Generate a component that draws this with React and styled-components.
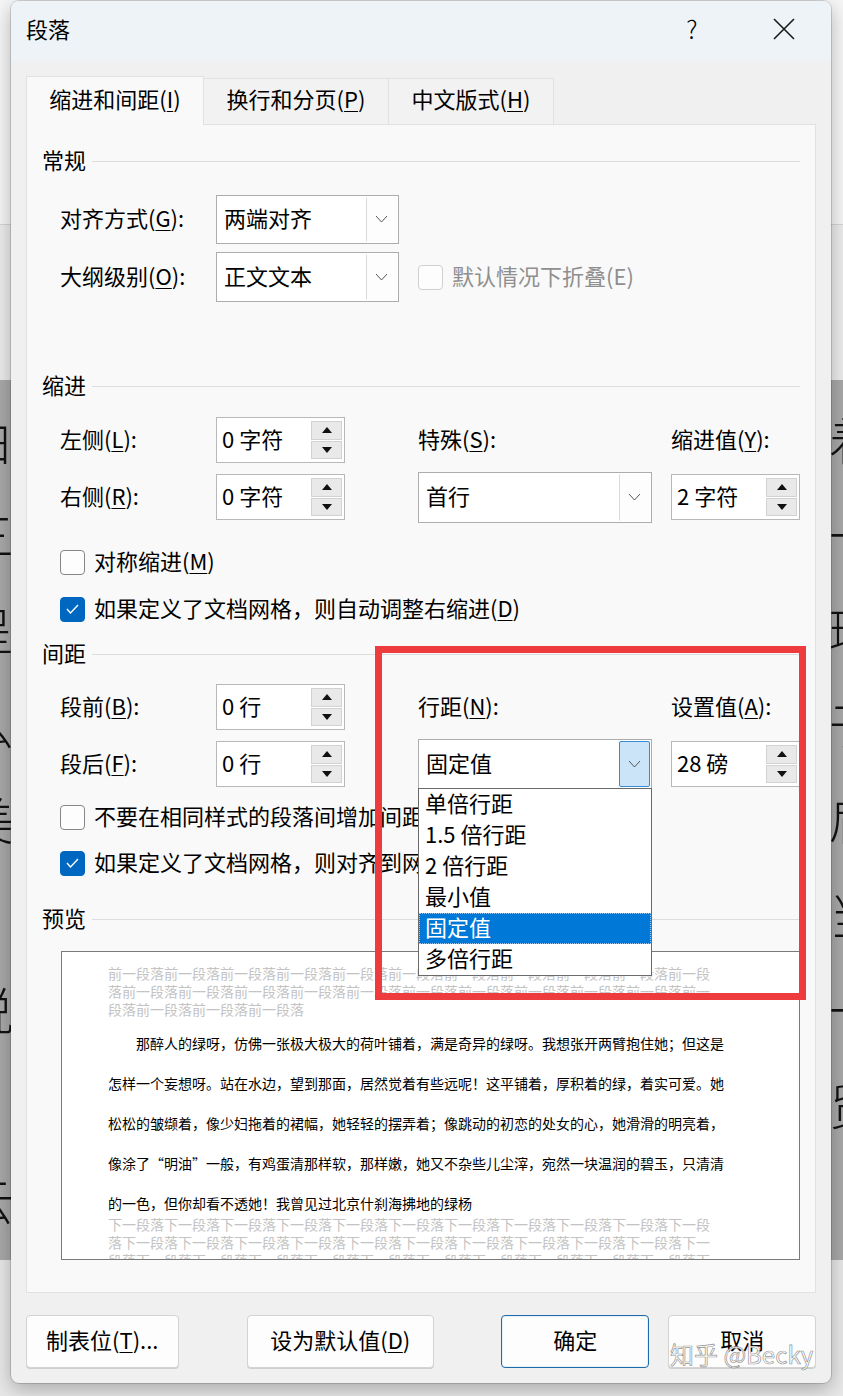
import React from 'react';
import styled, { createGlobalStyle } from 'styled-components';

const GlobalStyle = createGlobalStyle`
  html, body {
    margin: 0;
    padding: 0;
  }
  body {
    width: 843px;
    height: 1396px;
    overflow: hidden;
    font-family: "Noto Sans CJK SC", "Microsoft YaHei", sans-serif;
  }
  #root {
    position: relative;
    width: 843px;
    height: 1396px;
  }
  u {
    text-decoration-thickness: 1px;
    text-underline-offset: 3px;
  }
`;

// ---- document behind the dialog ----

const Backdrop = styled.div`
  display: flex;
  flex-direction: column;
  height: 100%;
`;

const RibbonBand = styled.div`
  height: 225px;
  box-sizing: border-box;
  background: #f6f6f6;
  border-bottom: 1px solid #d6d6d6;
`;

const RulerBand = styled.div`
  height: 155px;
  background: #ececec;
`;

const DocBand = styled.div`
  height: 880px;
  box-sizing: border-box;
  padding-top: 10px;
  overflow: hidden;
  background: #a9a9a9;
`;

const DocLine = styled.div`
  display: flex;
  justify-content: space-between;
  align-items: center;
  height: 95px;
  margin: 0 -36px;
  font-size: 50px;
  font-weight: 300;
  color: #111;
`;

const RestBand = styled.div`
  flex: 1;
  background: #e8e8e8;
`;

// ---- dialog frame ----

const Dialog = styled.div`
  position: absolute;
  left: 11px;
  top: 1px;
  width: 820px;
  height: 1382px;
  display: flex;
  flex-direction: column;
  overflow: hidden;
  border-radius: 8px;
  background: #f0f0f0;
  box-shadow: 0 0 0 1px rgba(0, 0, 0, 0.14), 0 6px 20px rgba(0, 0, 0, 0.28);
  font-size: 22px;
  color: #000;
`;

const TitleBar = styled.div`
  display: flex;
  align-items: center;
  height: 60px;
  padding-left: 15px;
  background: #edf3f6;
`;

const Title = styled.span`
  flex: 1;
  padding-bottom: 7px;
  font-size: 22px;
`;

const CaptionButton = styled.span`
  display: flex;
  align-items: center;
  justify-content: center;
  width: 46px;
  height: 60px;
  box-sizing: border-box;
  padding-bottom: ${p => p.$pb || 0}px;
  margin-right: ${p => p.$mr}px;
  font-size: 25px;
  font-weight: 300;
`;

const Body = styled.div`
  display: flex;
  flex-direction: column;
  flex: 1;
  padding: 15px 15px 15px;
`;

const Tabs = styled.div`
  display: flex;
  align-items: flex-end;
  height: 48px;
  position: relative;
  z-index: 1;
`;

const Tab = styled.div`
  display: flex;
  align-items: center;
  justify-content: center;
  box-sizing: border-box;
  width: ${p => p.$w}px;
  height: ${p => (p.$active ? 49 : 46)}px;
  padding-bottom: 7px;
  margin-bottom: ${p => (p.$active ? -1 : 0)}px;
  border: 1px solid #e1e1e1;
  border-bottom: none;
  border-left-width: ${p => (p.$first ? 1 : 0)}px;
  background: ${p => (p.$active ? '#f9f9f9' : '#f2f2f2')};
`;

const Panel = styled.div`
  display: flex;
  flex-direction: column;
  height: 1169px;
  box-sizing: border-box;
  padding: 0 15px;
  background: #f9f9f9;
  border: 1px solid #e1e1e1;
`;

const SectionHead = styled.div`
  display: flex;
  align-items: center;
  gap: 6px;
  height: 30px;
  margin-top: ${p => p.$mt}px;

  &::after {
    content: '';
    flex: 1;
    height: 1px;
    background: #dddddd;
  }
`;

const HeadText = styled.span`
  padding-bottom: 5px;
`;

const FieldGrid = styled.div`
  display: grid;
  grid-template-columns: ${p => p.$cols};
  grid-auto-rows: ${p => p.$row}px;
  row-gap: ${p => p.$gap}px;
  align-items: center;
  margin: ${p => p.$mt}px 0 0 18px;
`;

const Label = styled.span`
  grid-column: ${p => p.$at || 'auto'};
  padding-bottom: 5px;
  white-space: nowrap;
  color: ${p => (p.$disabled ? '#8f8f8f' : '#000')};
`;

// ---- controls ----

const SpinBox = styled.div`
  grid-column: ${p => p.$at || 'auto'};
  display: flex;
  align-items: center;
  height: 46px;
  box-sizing: border-box;
  padding-left: 5px;
  background: #fff;
  border: 1px solid #b8b8b8;
`;

const SpinValue = styled.span`
  flex: 1;
  padding-bottom: 4px;
  white-space: nowrap;
`;

const SpinButtons = styled.div`
  display: flex;
  flex-direction: column;
  gap: 1px;
  align-self: stretch;
  width: 31px;
  margin: 3px 2px 3px 0;
`;

const SpinArrow = styled.div`
  flex: 1;
  display: flex;
  align-items: center;
  justify-content: center;
  background: #e9e9e9;
  border: 1px solid #d2d2d2;

  &::before {
    content: '';
    border-left: 5px solid transparent;
    border-right: 5px solid transparent;
    ${p => (p.$down ? 'border-top: 6px solid #111;' : 'border-bottom: 6px solid #111;')}
  }
`;

const SelectBox = styled.div`
  grid-column: ${p => p.$at || 'auto'};
  position: relative;
  display: flex;
  align-items: center;
  height: ${p => p.$h}px;
  box-sizing: border-box;
  padding-left: 7px;
  background: #fff;
  border: 1px solid #adadad;
`;

const SelectValue = styled.span`
  flex: 1;
  padding-bottom: 4px;
  white-space: nowrap;
`;

const SelectButton = styled.span`
  display: flex;
  align-items: center;
  justify-content: center;
  align-self: stretch;
  width: 31px;
  margin: 1px 1px 1px 0;
  box-sizing: border-box;
  background: ${p => (p.$focus ? '#cce4f7' : '#fdfdfd')};
  border: 1px solid ${p => (p.$focus ? '#3b8ad4' : 'transparent')};
  border-left: 1px solid ${p => (p.$focus ? '#3b8ad4' : '#dadada')};
  border-radius: ${p => (p.$focus ? '2px' : '0')};
`;

const DropList = styled.div`
  position: absolute;
  top: 100%;
  left: -1px;
  right: -1px;
  z-index: 5;
  background: #fff;
  border: 1px solid #6a6a6a;
`;

const DropItem = styled.div`
  height: 31px;
  line-height: 27px;
  padding-left: 6px;
  box-sizing: border-box;
  white-space: nowrap;
  background: ${p => (p.$selected ? '#0078d7' : '#fff')};
  color: ${p => (p.$selected ? '#fff' : '#000')};
  outline: ${p => (p.$selected ? '1px dotted #9cc7ee' : 'none')};
  outline-offset: -1px;
`;

const CheckRow = styled.label`
  display: flex;
  align-items: center;
  gap: 9px;
  height: 34px;
  margin: ${p => p.$mt}px 0 0 18px;
  white-space: nowrap;
`;

const InlineCheck = styled.label`
  grid-column: ${p => p.$at || 'auto'};
  display: flex;
  align-items: center;
  gap: 9px;
  white-space: nowrap;
`;

const CheckText = styled.span`
  padding-bottom: 4px;
  color: ${p => (p.$disabled ? '#8f8f8f' : '#000')};
`;

const CheckBox = styled.span`
  display: flex;
  align-items: center;
  justify-content: center;
  flex: 0 0 25px;
  height: 25px;
  box-sizing: border-box;
  border-radius: 4px;
  border: 1px solid ${p => (p.$checked ? '#0067c0' : p.$disabled ? '#d0d0d0' : '#878787')};
  background: ${p => (p.$checked ? '#0067c0' : '#fdfdfd')};
`;

// ---- preview ----

const Preview = styled.div`
  height: 309px;
  box-sizing: border-box;
  margin: 17px 0 0 19px;
  padding: 13px 0 0 46px;
  overflow: hidden;
  background: #fff;
  border: 1px solid #7a7a7a;
  font-size: 14px;
`;

const GhostLine = styled.div`
  height: 18px;
  line-height: 17px;
  white-space: nowrap;
  color: #c3c3c3;
`;

const MainText = styled.div`
  width: 616px;
  margin: 5px 0 -8px;
`;

const MainLine = styled.div`
  height: 40px;
  line-height: 38px;
  white-space: nowrap;
  text-align: justify;
  text-align-last: ${p => (p.$last ? 'left' : 'justify')};
  text-indent: ${p => (p.$indent ? 28 : 0)}px;
`;

// ---- footer ----

const Footer = styled.div`
  display: flex;
  margin-top: 22px;
`;

const Button = styled.div`
  display: flex;
  align-items: center;
  justify-content: center;
  width: ${p => p.$w}px;
  height: 53px;
  box-sizing: border-box;
  padding-bottom: 5px;
  margin-left: ${p => p.$ml || 0}px;
  border-radius: 4px;
  background: #fdfdfd;
  border: 1px solid ${p => (p.$primary ? '#1f6aa8' : '#d3d3d3')};
  box-shadow: ${p => (p.$primary ? 'inset 0 0 0 1px #e6f0f8' : '0 1px 0 #cfcfcf')};
`;

// ---- overlays ----

const Highlight = styled.div`
  position: absolute;
  left: 364px;
  top: 645px;
  width: 431px;
  height: 354px;
  box-sizing: border-box;
  border: 7px solid #ee3b3e;
  z-index: 6;
  pointer-events: none;
`;

const Watermark = styled.div`
  position: absolute;
  left: 670px;
  top: 1336px;
  font-size: 24px;
  color: rgba(255, 255, 255, 0.88);
  -webkit-text-stroke: 0.7px rgba(110, 110, 110, 0.75);
  white-space: nowrap;
`;

const Chevron = () => (
  <svg width="13" height="8" viewBox="0 0 13 8">
    <polyline points="1,1 6.5,7 12,1" fill="none" stroke="#555" strokeWidth="1" />
  </svg>
);

const CheckMark = () => (
  <svg width="15" height="12" viewBox="0 0 15 12">
    <polyline points="2,6 5.5,10 13,2" fill="none" stroke="#fff" strokeWidth="1.4" />
  </svg>
);

const CloseIcon = () => (
  <svg width="22" height="22" viewBox="0 0 22 22">
    <path d="M1 1 L21 21 M21 1 L1 21" stroke="#1a1a1a" strokeWidth="1.6" />
  </svg>
);

const Spin = ({ value, at }) => (
  <SpinBox $at={at}>
    <SpinValue>{value}</SpinValue>
    <SpinButtons>
      <SpinArrow />
      <SpinArrow $down />
    </SpinButtons>
  </SpinBox>
);

const Select = ({ value, at, h = 50, focus, items, selected }) => (
  <SelectBox $at={at} $h={h}>
    <SelectValue>{value}</SelectValue>
    <SelectButton $focus={focus}>
      <Chevron />
    </SelectButton>
    {items && (
      <DropList>
        {items.map(item => (
          <DropItem key={item} $selected={item === selected}>
            {item}
          </DropItem>
        ))}
      </DropList>
    )}
  </SelectBox>
);

const Check = ({ checked, disabled }) => (
  <CheckBox $checked={checked} $disabled={disabled}>
    {checked && <CheckMark />}
  </CheckBox>
);

const LINE_SPACING = ['单倍行距', '1.5 倍行距', '2 倍行距', '最小值', '固定值', '多倍行距'];

const COLS = '156px 129px 73px 234px 19px 129px';

const before = '前一段落';
const after = '下一段落';

const mainLines = [
  '那醉人的绿呀，仿佛一张极大极大的荷叶铺着，满是奇异的绿呀。我想张开两臂抱住她；但这是',
  '怎样一个妄想呀。站在水边，望到那面，居然觉着有些远呢！这平铺着，厚积着的绿，着实可爱。她',
  '松松的皱缬着，像少妇拖着的裙幅，她轻轻的摆弄着；像跳动的初恋的处女的心，她滑滑的明亮着，',
  '像涂了“明油”一般，有鸡蛋清那样软，那样嫩，她又不杂些儿尘滓，宛然一块温润的碧玉，只清清',
  '的一色，但你却看不透她！我曾见过北京什刹海拂地的绿杨',
];

const docEdges = [
  ['白', '着'],
  ['三', '一'],
  ['呈', '瑚'],
  ['么', '于'],
  ['美', '肩'],
  ['', '当'],
  ['说', '一'],
  ['！', '贸'],
  ['云', ''],
];

const App = () => {
  return (
    <>
      <GlobalStyle />
      <Backdrop>
        <RibbonBand />
        <RulerBand />
        <DocBand>
          {docEdges.map(([l, r], i) => (
            <DocLine key={i}>
              <span>{l || '\u3000'}</span>
              <span>{r || '\u3000'}</span>
            </DocLine>
          ))}
        </DocBand>
        <RestBand />
      </Backdrop>

      <Dialog>
        <TitleBar>
          <Title>段落</Title>
          <CaptionButton $mr={46} $pb={6}>?</CaptionButton>
          <CaptionButton $mr={24} $pb={4}>
            <CloseIcon />
          </CaptionButton>
        </TitleBar>

        <Body>
          <Tabs>
            <Tab $active $first $w={178}>缩进和间距(<u>I</u>)</Tab>
            <Tab $w={185}>换行和分页(<u>P</u>)</Tab>
            <Tab $w={165}>中文版式(<u>H</u>)</Tab>
          </Tabs>

          <Panel>
            <SectionHead $mt={21}><HeadText>常规</HeadText></SectionHead>
            <FieldGrid $mt={18} $cols="156px 183px 19px auto" $row={50} $gap={8}>
              <Label>对齐方式(<u>G</u>):</Label>
              <Select value="两端对齐" h={49} />
              <span />
              <span />
              <Label>大纲级别(<u>O</u>):</Label>
              <Select value="正文文本" />
              <span />
              <InlineCheck>
                <Check disabled />
                <CheckText $disabled>默认情况下折叠(E)</CheckText>
              </InlineCheck>
            </FieldGrid>

            <SectionHead $mt={69}><HeadText>缩进</HeadText></SectionHead>
            <FieldGrid $mt={16} $cols={COLS} $row={46} $gap={11}>
              <Label>左侧(<u>L</u>):</Label>
              <Spin value="0 字符" />
              <Label $at={4}>特殊(<u>S</u>):</Label>
              <Label $at={6}>缩进值(<u>Y</u>):</Label>
              <Label>右侧(<u>R</u>):</Label>
              <Spin value="0 字符" />
              <Select at={4} value="首行" h={51} />
              <Spin at={6} value="2 字符" />
            </FieldGrid>

            <CheckRow $mt={25}>
              <Check />
              <CheckText>对称缩进(<u>M</u>)</CheckText>
            </CheckRow>
            <CheckRow $mt={13}>
              <Check checked />
              <CheckText>如果定义了文档网格，则自动调整右缩进(<u>D</u>)</CheckText>
            </CheckRow>

            <SectionHead $mt={13}><HeadText>间距</HeadText></SectionHead>
            <FieldGrid $mt={15} $cols={COLS} $row={46} $gap={11}>
              <Label>段前(<u>B</u>):</Label>
              <Spin value="0 行" />
              <Label $at={4}>行距(<u>N</u>):</Label>
              <Label $at={6}>设置值(<u>A</u>):</Label>
              <Label>段后(<u>F</u>):</Label>
              <Spin value="0 行" />
              <Select at={4} value="固定值" focus items={LINE_SPACING} selected="固定值" />
              <Spin at={6} value="28 磅" />
            </FieldGrid>

            <CheckRow $mt={13}>
              <Check />
              <CheckText>不要在相同样式的段落间增加间距(<u>C</u>)</CheckText>
            </CheckRow>
            <CheckRow $mt={12}>
              <Check checked />
              <CheckText>如果定义了文档网格，则对齐到网格(<u>W</u>)</CheckText>
            </CheckRow>

            <SectionHead $mt={24}><HeadText>预览</HeadText></SectionHead>
            <Preview>
              <GhostLine>{before.repeat(10) + '前一段'}</GhostLine>
              <GhostLine>{'落' + before.repeat(10) + '前一'}</GhostLine>
              <GhostLine>{'段落' + before.repeat(3)}</GhostLine>
              <MainText>
                {mainLines.map((line, i) => (
                  <MainLine key={i} $indent={i === 0} $last={i === mainLines.length - 1}>
                    {line}
                  </MainLine>
                ))}
              </MainText>
              <GhostLine>{after.repeat(10) + '下一段'}</GhostLine>
              <GhostLine>{'落' + after.repeat(10) + '下一'}</GhostLine>
              <GhostLine>{'段落' + after.repeat(10) + '下'}</GhostLine>
            </Preview>
          </Panel>

          <Footer>
            <Button $w={153}>制表位(<u>T</u>)...</Button>
            <Button $w={188} $ml={68}>设为默认值(<u>D</u>)</Button>
            <Button $w={149} $ml={67} $primary>确定</Button>
            <Button $w={148} $ml={19}>取消</Button>
          </Footer>
        </Body>

        <Highlight />
      </Dialog>

      <Watermark>知乎 @Becky</Watermark>
    </>
  );
};

export default App;
